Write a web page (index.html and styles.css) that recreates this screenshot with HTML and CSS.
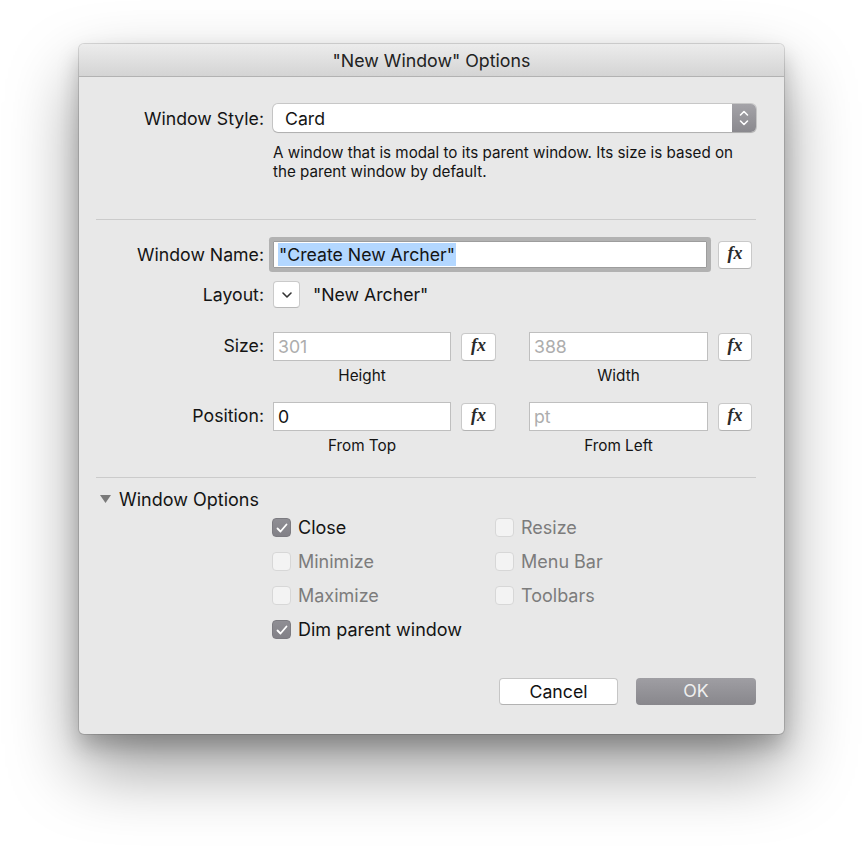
FILE: index.html
```html
<!DOCTYPE html>
<html lang="en">
<head>
    <meta charset="UTF-8">
    <title>"New Window" Options</title>
    <link rel="stylesheet" href="styles.css">
</head>
<body>

<div class="window">
    <div class="titlebar">"New Window" Options</div>
    <div class="content">

        <div class="row style-row">
            <div class="label">Window Style:</div>
            <div class="select">
                <span class="select-value">Card</span>
                <span class="stepper">
                    <svg width="24" height="28" viewBox="0 0 24 28">
                        <polyline points="8.5,11 12,7.5 15.5,11" fill="none" stroke="#fff" stroke-width="1.6" stroke-linecap="round" stroke-linejoin="round"/>
                        <polyline points="8.5,17 12,20.5 15.5,17" fill="none" stroke="#fff" stroke-width="1.6" stroke-linecap="round" stroke-linejoin="round"/>
                    </svg>
                </span>
            </div>
        </div>
        <p class="desc">A window that is modal to its parent window. Its size is based on<br>the parent window by default.</p>

        <div class="sep"></div>

        <div class="row name-row">
            <div class="label">Window Name:</div>
            <div class="input name-input focused"><span class="selected">"Create New Archer"</span></div>
            <div class="fx name-fx">fx</div>
        </div>

        <div class="row layout-row">
            <div class="label">Layout:</div>
            <div class="popup">
                <svg width="12" height="8" viewBox="0 0 12 8">
                    <polyline points="2,2 6,6 10,2" fill="none" stroke="#333" stroke-width="1.6" stroke-linecap="round" stroke-linejoin="round"/>
                </svg>
            </div>
            <div class="layout-value">"New Archer"</div>
        </div>

        <div class="row field-row size-row">
            <div class="label tall">Size:</div>
            <div class="fields">
                <div class="field-line">
                    <div class="input box placeholder">301</div>
                    <div class="fx">fx</div>
                    <div class="input box second placeholder">388</div>
                    <div class="fx">fx</div>
                </div>
                <div class="caption-line">
                    <span class="caption">Height</span>
                    <span class="caption second">Width</span>
                </div>
            </div>
        </div>

        <div class="row field-row position-row">
            <div class="label tall">Position:</div>
            <div class="fields">
                <div class="field-line">
                    <div class="input box">0</div>
                    <div class="fx">fx</div>
                    <div class="input box second placeholder">pt</div>
                    <div class="fx">fx</div>
                </div>
                <div class="caption-line">
                    <span class="caption">From Top</span>
                    <span class="caption second">From Left</span>
                </div>
            </div>
        </div>

        <div class="sep sep-bottom"></div>

        <div class="disclosure">
            <svg width="11" height="8" viewBox="0 0 11 8">
                <polygon points="0,0 11,0 5.5,8" fill="#7a7a7a"/>
            </svg>
            <span>Window Options</span>
        </div>

        <div class="options">
            <div class="check"><span class="box-check on"><svg width="18" height="18" viewBox="0 0 18 18"><polyline points="4.5,9.5 7.5,12.5 13.5,5.5" fill="none" stroke="#fff" stroke-width="1.8" stroke-linecap="round" stroke-linejoin="round"/></svg></span>Close</div>
            <div class="check off"><span class="box-check"></span>Resize</div>
            <div class="check off"><span class="box-check"></span>Minimize</div>
            <div class="check off"><span class="box-check"></span>Menu Bar</div>
            <div class="check off"><span class="box-check"></span>Maximize</div>
            <div class="check off"><span class="box-check"></span>Toolbars</div>
            <div class="check"><span class="box-check on"><svg width="18" height="18" viewBox="0 0 18 18"><polyline points="4.5,9.5 7.5,12.5 13.5,5.5" fill="none" stroke="#fff" stroke-width="1.8" stroke-linecap="round" stroke-linejoin="round"/></svg></span>Dim parent window</div>
        </div>

        <div class="buttons">
            <div class="btn cancel">Cancel</div>
            <div class="btn ok">OK</div>
        </div>

    </div>
</div>

</body>
</html>
```

FILE: styles.css
```css
* {
    box-sizing: border-box;
}
html {
    overflow: hidden;
}
body {
    margin: 0;
    padding: 44px 0 0 79px;
    min-height: 100vh;
    background-color: #fff;
    font-family: Inter, "Liberation Sans", sans-serif;
    color: #141414;
}
.window {
    width: 705px;
    background-color: #e8e8e8;
    border-radius: 5px;
    overflow: hidden;
    box-shadow: 0 0 0 1px rgba(0, 0, 0, 0.13),
                0 12px 22px rgba(0, 0, 0, 0.22),
                0 34px 70px rgba(0, 0, 0, 0.4);
}
.titlebar {
    height: 33px;
    line-height: 33px;
    text-align: center;
    font-size: 17.8px;
    color: #222;
    background: linear-gradient(#ececec, #d4d4d4);
    border-bottom: 1px solid #b2b2b2;
}
.content {
    padding: 27px 28px 29px 17px;
}
.row {
    display: flex;
    align-items: center;
    gap: 9px;
}
.label {
    width: 168px;
    flex: none;
    text-align: right;
    font-size: 17.7px;
}
.label.tall {
    height: 29px;
    line-height: 27px;
}

/* window style popup */
.style-row {
    height: 28px;
}
.select {
    flex: 1;
    height: 28px;
    display: flex;
    align-items: center;
    background-color: #fff;
    border-radius: 5px;
    box-shadow: 0 0 0 1px rgba(0, 0, 0, 0.14), 0 1px 1px rgba(0, 0, 0, 0.12);
    overflow: hidden;
}
.select-value {
    flex: 1;
    padding-left: 12px;
    font-size: 17.7px;
}
.stepper {
    width: 24px;
    height: 28px;
    background: linear-gradient(#a4a3a8, #8a898e);
}
.stepper svg {
    display: block;
}
.desc {
    margin: 11px 0 0 177px;
    font-size: 15.2px;
    line-height: 19px;
    white-space: nowrap;
}
.sep {
    height: 1px;
    margin-top: 38px;
    background-color: #cbcbcb;
}
.sep-bottom {
    margin-top: 21px;
}

/* text fields */
.input {
    height: 27px;
    display: flex;
    align-items: center;
    padding: 0 4px;
    background-color: #fff;
    border: 1px solid #bfbfbf;
    font-size: 17.7px;
}
.placeholder {
    color: #adadad;
}
.name-row {
    margin-top: 21px;
    height: 27px;
}
.name-input {
    width: 434px;
}
.focused {
    border-color: #9d9d9d;
    border-radius: 1px;
    box-shadow: 0 0 0 4px #b2b2b2;
}
.selected {
    background-color: #b3d7ff;
    padding: 1px 1px;
}
.fx {
    width: 35px;
    height: 28px;
    flex: none;
    display: flex;
    align-items: center;
    justify-content: center;
    background-color: #fff;
    border: 1px solid #c9c9c9;
    border-bottom-color: #b3b3b3;
    border-radius: 4px;
    font-family: "Liberation Serif", serif;
    font-style: italic;
    font-weight: bold;
    font-size: 18px;
    color: #2a2a2a;
    padding-bottom: 2px;
}
.name-fx {
    width: 34px;
    margin-left: 2px;
}

/* layout */
.layout-row {
    margin-top: 13px;
    height: 27px;
}
.popup {
    width: 27px;
    height: 27px;
    display: flex;
    align-items: center;
    justify-content: center;
    background-color: #fff;
    border: 1px solid #cacaca;
    border-bottom-color: #b8b8b8;
    border-radius: 4px;
}
.layout-value {
    margin-left: 4px;
    font-size: 17.7px;
}

/* size / position */
.field-row {
    align-items: flex-start;
}
.size-row {
    margin-top: 24px;
}
.position-row {
    margin-top: 16px;
}
.field-line {
    display: flex;
    align-items: center;
}
.box {
    width: 178px;
    height: 29px;
}
.field-line .fx {
    margin-left: 10px;
}
.field-line .box.second {
    width: 179px;
    margin-left: 33px;
}
.field-line .fx:last-child {
    width: 34px;
}
.caption-line {
    display: flex;
    margin-top: 5px;
    height: 20px;
    line-height: 20px;
    font-size: 15.3px;
}
.caption {
    width: 178px;
    text-align: center;
}
.caption.second {
    width: 179px;
    margin-left: 78px;
}

/* window options */
.disclosure {
    margin-top: 10px;
    height: 22px;
    display: flex;
    align-items: center;
    padding-left: 4px;
    font-size: 18px;
}
.disclosure span {
    margin-left: 8px;
}
.options {
    margin: 7px 0 0 176px;
    display: grid;
    grid-template-columns: 223px auto;
    row-gap: 14px;
}
.check {
    height: 20px;
    display: flex;
    align-items: center;
    gap: 7px;
    font-size: 18px;
}
.check.off {
    color: #7c7c7c;
}
.box-check {
    width: 19px;
    height: 19px;
    border-radius: 4px;
    background-color: #f3f3f3;
    border: 1px solid #d7d7d7;
}
.box-check.on {
    background: linear-gradient(#8f8e94, #828187);
    border-color: #7c7b81;
}
.box-check svg {
    display: block;
}

/* buttons */
.buttons {
    margin-top: 39px;
    display: flex;
    justify-content: flex-end;
    gap: 18px;
}
.btn {
    width: 119px;
    height: 27px;
    line-height: 26px;
    text-align: center;
    border-radius: 4px;
    font-size: 17.7px;
}
.cancel {
    background-color: #fff;
    border: 1px solid #c6c6c6;
    border-bottom-color: #b2b2b2;
    color: #111;
}
.ok {
    width: 120px;
    background: linear-gradient(#9f9ea3, #88878c);
    color: #efefef;
}
```
